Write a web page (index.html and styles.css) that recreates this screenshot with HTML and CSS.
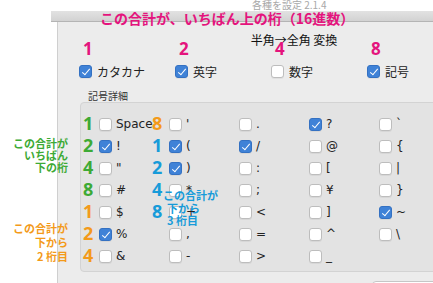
FILE: index.html
```html
<!DOCTYPE html>
<html>
<head>
  <meta charset="UTF-8">
  <link rel="stylesheet" href="styles.css">
  <title>半角→全角 変換</title>
</head>
<body>
  <div class="wintop"><span class="wintitle">各種を設定 2.1.4</span></div>
  <div class="titlebar"></div>

  <div class="sheet">
    <div class="heading">半角→全角 変換</div>

    <div class="toprow">
      <label class="opt"><span class="cb on"></span>カタカナ</label>
      <label class="opt"><span class="cb on"></span>英字</label>
      <label class="opt"><span class="cb"></span>数字</label>
      <label class="opt"><span class="cb on"></span>記号</label>
    </div>

    <div class="legend">記号詳細</div>
    <div class="group">
      <div class="grid">
        <label class="item"><span class="cb"></span>Space</label>
        <label class="item"><span class="cb on"></span>!</label>
        <label class="item"><span class="cb"></span>"</label>
        <label class="item"><span class="cb"></span>#</label>
        <label class="item"><span class="cb"></span>$</label>
        <label class="item"><span class="cb on"></span>%</label>
        <label class="item"><span class="cb"></span>&amp;</label>

        <label class="item"><span class="cb"></span>'</label>
        <label class="item"><span class="cb on"></span>(</label>
        <label class="item"><span class="cb on"></span>)</label>
        <label class="item"><span class="cb"></span>*</label>
        <label class="item"><span class="cb"></span>+</label>
        <label class="item"><span class="cb"></span>,</label>
        <label class="item"><span class="cb"></span>-</label>

        <label class="item"><span class="cb"></span>.</label>
        <label class="item"><span class="cb on"></span>/</label>
        <label class="item"><span class="cb"></span>:</label>
        <label class="item"><span class="cb"></span>;</label>
        <label class="item"><span class="cb"></span>&lt;</label>
        <label class="item"><span class="cb"></span>=</label>
        <label class="item"><span class="cb"></span>&gt;</label>

        <label class="item"><span class="cb on"></span>?</label>
        <label class="item"><span class="cb"></span>@</label>
        <label class="item"><span class="cb"></span>[</label>
        <label class="item"><span class="cb"></span>¥</label>
        <label class="item"><span class="cb"></span>]</label>
        <label class="item"><span class="cb"></span>^</label>
        <label class="item"><span class="cb"></span>_</label>

        <label class="item"><span class="cb"></span>`</label>
        <label class="item"><span class="cb"></span>{</label>
        <label class="item"><span class="cb"></span>|</label>
        <label class="item"><span class="cb"></span>}</label>
        <label class="item"><span class="cb on"></span>~</label>
        <label class="item"><span class="cb"></span>\</label>
      </div>
    </div>

    <div class="footer"><span class="btn"></span></div>
  </div>

  <!-- 注釈（スクリーンショットの上に重ねる） -->
  <div class="ann ann-title">この合計が、いちばん上の桁（16進数）</div>
  <div class="ann ann-topdigits">
    <span>1</span><span>2</span><span>4</span><span>8</span>
  </div>

  <div class="ann num green col1">1<br>2<br>4<br>8</div>
  <div class="ann num orange col1 low">1<br>2<br>4</div>
  <div class="ann num orange col2">8</div>
  <div class="ann num blue col2 second">1<br>2<br>4<br>8</div>

  <div class="ann note green note-green">この合計が<br>いちばん<br>下の桁</div>
  <div class="ann note orange note-orange">この合計が<br>下から<br>2 桁目</div>
  <div class="ann note blue note-blue">この合計が<br>下から<br>3 桁目</div>
</body>
</html>
```

FILE: styles.css
```css
/* -- css -- */
html,
body {
  margin: 0;
  padding: 0;
}

body {
  position: relative;
  width: 433px;
  height: 283px;
  overflow: hidden;
  background: #ffffff;
  font-family: "Noto Sans CJK JP", sans-serif;
  color: #222222;
}

/* 後ろのウィンドウ */
.wintop {
  height: 11px;
  padding-left: 252px;
  overflow: hidden;
}

.wintitle {
  display: block;
  font-size: 10px;
  line-height: 10px;
  color: #a8a8a8;
}

.titlebar {
  margin-left: 51px;
  height: 10px;
  background: linear-gradient(#e2e2e2, #d2d2d2);
  border-bottom: 1px solid #b4b4b4;
}

/* シート本体 */
.sheet {
  margin-left: 57px;
  width: 472px;
  height: 261px;
  background: #ececec;
  border-left: 1px solid #cfcfcf;
}

.heading {
  padding-top: 10px;
  font-size: 12px;
  line-height: 16px;
  text-align: center;
  color: #111111;
}

.toprow {
  display: grid;
  grid-template-columns: repeat(4, 96px);
  margin-top: 14px;
  padding-left: 21px;
}

.opt,
.item {
  display: flex;
  align-items: center;
  gap: 5px;
  font-size: 12px;
  color: #222222;
}

.opt {
  height: 18px;
}

.legend {
  margin-top: 10px;
  padding-left: 30px;
  font-size: 10px;
  line-height: 12px;
  color: #333333;
}

.group {
  margin-left: 22px;
  width: 440px;
  padding: 10px 0 4px 18px;
  background: #e3e3e3;
  border: 1px solid #d3d3d3;
  border-radius: 4px;
}

.grid {
  display: grid;
  grid-template-rows: repeat(7, 22px);
  grid-auto-flow: column;
  grid-auto-columns: 70px;
}

.item {
  gap: 4px;
  font-family: "DejaVu Sans", sans-serif;
}

/* チェックボックス */
.cb {
  position: relative;
  flex: none;
  box-sizing: border-box;
  width: 13px;
  height: 13px;
  background: #ffffff;
  border: 1px solid #bdbdbd;
  border-radius: 3px;
  box-shadow: 0 1px 0 rgba(0, 0, 0, 0.05);
}

.cb.on {
  background: #3f82d7;
  border-color: #3471c2;
}

.cb.on::after {
  content: "";
  position: absolute;
  left: 3.5px;
  top: 1px;
  width: 3px;
  height: 7px;
  border-right: 1.6px solid #ffffff;
  border-bottom: 1.6px solid #ffffff;
  transform: rotate(40deg);
}

.footer {
  padding-top: 9px;
  padding-left: 314px;
}

.btn {
  display: block;
  width: 90px;
  height: 20px;
  background: #ffffff;
  border: 1px solid #c6c6c6;
  border-radius: 4px;
}

/* 注釈 */
.ann {
  position: absolute;
  font-weight: 700;
}

.ann-title {
  left: 100px;
  top: 11px;
  font-size: 14px;
  line-height: 14px;
  color: #e4147d;
  white-space: nowrap;
}

.ann-topdigits {
  left: 83px;
  top: 40px;
  display: grid;
  grid-template-columns: repeat(4, 96px);
  font-family: "Noto Sans", sans-serif;
  font-size: 17px;
  line-height: 17px;
  color: #e4147d;
}

.num {
  font-family: "Noto Sans", sans-serif;
  font-size: 18px;
  line-height: 22px;
  top: 112px;
}

.col1 {
  left: 83px;
}

.col2 {
  left: 152px;
}

.num.low {
  top: 200px;
}

.num.second {
  top: 134px;
}

.green {
  color: #3daa35;
}

.orange {
  color: #f39a1a;
}

.blue {
  color: #179bd9;
}

.note {
  font-size: 11px;
  white-space: nowrap;
}

.note-green {
  left: 8px;
  width: 60px;
  top: 137px;
  line-height: 12px;
  text-align: right;
}

.note-orange {
  left: 8px;
  width: 60px;
  top: 221px;
  line-height: 14px;
  text-align: right;
}

.note-blue {
  left: 163px;
  top: 189px;
  line-height: 12.5px;
  padding-left: 4px;
  text-indent: -4px;
}
```
